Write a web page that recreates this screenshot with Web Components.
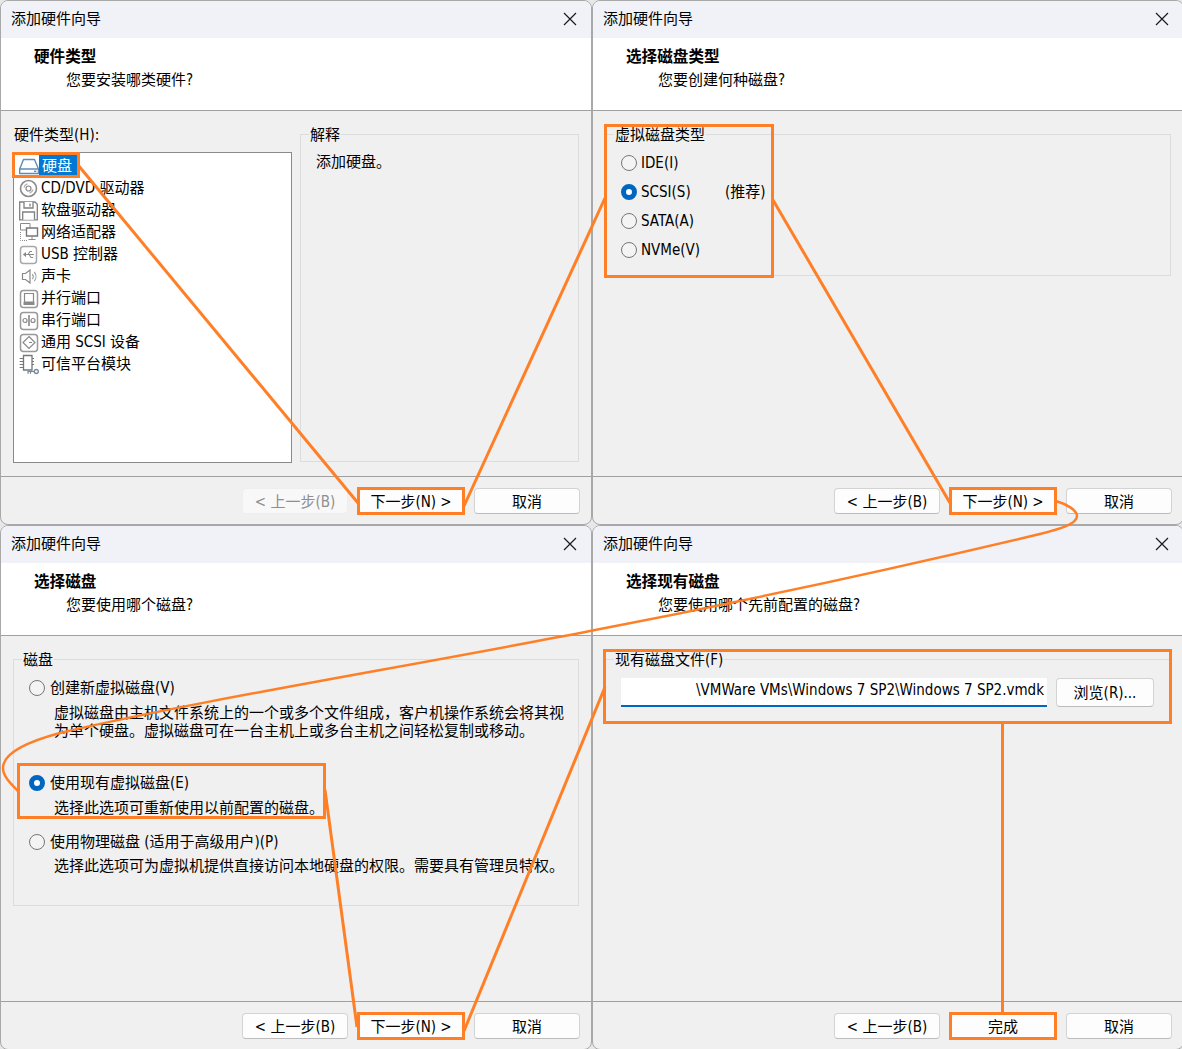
<!DOCTYPE html>
<html lang="zh-CN"><head><meta charset="utf-8"><title>添加硬件向导</title>
<style>
html,body{margin:0;padding:0;width:1182px;height:1049px;overflow:hidden;background:#e8e8e8}
body{position:relative;font:15px/20px "DejaVu Sans Condensed","Noto Sans CJK SC",sans-serif;color:#000}
.sheet{display:grid;grid-template-columns:592px 592px;grid-template-rows:525px 525px;width:1184px}
.w1{display:grid;grid-template-columns:279px 279px;column-gap:8px;padding:13px 12px 0 12px}
.list-label{margin-bottom:6px;display:block;line-height:22px;padding-left:1px}
.file{display:flex;gap:9px;padding:9px 0 17px 8px}
</style></head><body>
<div class="sheet">
<wiz-window heading="硬件类型" sub="您要安装哪类硬件?" back-disabled>
  <div class="w1">
    <div><span class="list-label">硬件类型(H):</span>
    <hw-list>
      <hw-item icon="hdd" selected>硬盘</hw-item>
      <hw-item icon="cd">CD/DVD 驱动器</hw-item>
      <hw-item icon="floppy">软盘驱动器</hw-item>
      <hw-item icon="net">网络适配器</hw-item>
      <hw-item icon="usb">USB 控制器</hw-item>
      <hw-item icon="sound">声卡</hw-item>
      <hw-item icon="par">并行端口</hw-item>
      <hw-item icon="ser">串行端口</hw-item>
      <hw-item icon="scsi">通用 SCSI 设备</hw-item>
      <hw-item icon="tpm">可信平台模块</hw-item>
    </hw-list></div>
    <wiz-group legend="解释" h="338"><wiz-desc style="margin:8px 0 0 8px">添加硬盘。</wiz-desc></wiz-group>
  </div>
</wiz-window>
<wiz-window heading="选择磁盘类型" sub="您要创建何种磁盘?">
  <div style="padding:13px 12px 0">
    <wiz-group legend="虚拟磁盘类型" h="152">
      <div style="padding-top:4px">
      <wiz-radio>IDE(I)</wiz-radio>
      <wiz-radio checked note="(推荐)">SCSI(S)</wiz-radio>
      <wiz-radio>SATA(A)</wiz-radio>
      <wiz-radio>NVMe(V)</wiz-radio>
      </div>
    </wiz-group>
  </div>
</wiz-window>
<wiz-window heading="选择磁盘" sub="您要使用哪个磁盘?">
  <div style="padding:13px 12px 0">
    <wiz-group legend="磁盘" h="257">
      <div style="padding-top:4px">
      <wiz-radio wide>创建新虚拟磁盘(V)</wiz-radio>
      <wiz-desc style="margin:2px 0 0 33px;line-height:18px">虚拟磁盘由主机文件系统上的一个或多个文件组成，客户机操作系统会将其视<br>为单个硬盘。虚拟磁盘可在一台主机上或多台主机之间轻松复制或移动。</wiz-desc>
      <wiz-radio wide checked style="margin-top:28px">使用现有虚拟磁盘(E)</wiz-radio>
      <wiz-desc style="margin:2px 0 0 33px;line-height:18px">选择此选项可重新使用以前配置的磁盘。</wiz-desc>
      <wiz-radio wide style="margin-top:10px">使用物理磁盘 (适用于高级用户)(P)</wiz-radio>
      <wiz-desc style="margin:1px 0 0 33px;line-height:18px">选择此选项可为虚拟机提供直接访问本地硬盘的权限。需要具有管理员特权。</wiz-desc>
      </div>
    </wiz-group>
  </div>
</wiz-window>
<wiz-window heading="选择现有磁盘" sub="您要使用哪个先前配置的磁盘?" finish>
  <div style="padding:13px 12px 0">
    <wiz-group legend="现有磁盘文件(F)" h="74">
      <div class="file"><wiz-path>\VMWare VMs\Windows 7 SP2\Windows 7 SP2.vmdk</wiz-path><wiz-btn w="98" h="29">浏览(R)...</wiz-btn></div>
    </wiz-group>
  </div>
</wiz-window>
</div>
<wiz-marks></wiz-marks>
<script>
const def=(n,html)=>customElements.define(n,class extends HTMLElement{
  connectedCallback(){ if(this.shadowRoot) return; const r=this.attachShadow({mode:'open'}); r.innerHTML=typeof html==='function'?html(this):html;}
});
def('wiz-btn',h=>`<style>:host{display:block}
.b{box-sizing:border-box;width:${h.getAttribute('w')||106}px;height:${h.getAttribute('h')||26}px;border:1px solid #d3d3d3;border-bottom-color:#bcbcbc;border-radius:4px;background:#fdfdfd;text-align:center;line-height:${(+h.getAttribute('h')||26)}px;color:#000;overflow:hidden}
:host([disabled]) .b{background:#f8f8f8;border-color:#eeeeee;color:#8f8f8f}</style><div class="b"><slot></slot></div>`);
def('wiz-window',h=>`<style>:host{display:flex;flex-direction:column;box-sizing:border-box;width:592px;height:525px;border:1px solid #a8a8a8;border-radius:8px;background:#f0f0f0;overflow:hidden}
.t{flex:none;box-sizing:border-box;height:37px;background:#f0f2f8;display:flex;align-items:center;justify-content:space-between;padding:0 14px 2px 10px}
.t svg{display:block}
.h{flex:none;height:64px;background:#fff;border-bottom:1px solid #a0a0a0;padding:8px 0 0 33px}
.h b{display:block;height:22px;line-height:22px;font-weight:700;font-size:15.6px}
.h span{display:block;padding:1px 0 0 32px;line-height:23px}
.m{flex:1;min-height:0}
.f{flex:none;height:48px;box-sizing:border-box;border-top:1px solid #a0a0a0;display:flex;justify-content:flex-end;gap:10px;padding:11px 11px 0 0}
</style><div class="t"><span>添加硬件向导</span><svg width="14" height="14" viewBox="0 0 14 14"><path d="M1 1L13 13M13 1L1 13" stroke="#1a1a1a" stroke-width="1.2" fill="none"/></svg></div>
<div class="h"><b>${h.getAttribute('heading')}</b><span>${h.getAttribute('sub')}</span></div>
<div class="m"><slot></slot></div>
<div class="f"><wiz-btn ${h.hasAttribute('back-disabled')?'disabled':''}>&lt; 上一步(B)</wiz-btn><wiz-btn>${h.hasAttribute('finish')?'完成':'下一步(N) &gt;'}</wiz-btn><wiz-btn>取消</wiz-btn></div>`);
def('wiz-group',h=>`<style>:host{display:block}
fieldset{margin:0;box-sizing:border-box;height:${h.getAttribute('h')}px;border:1px solid #dcdcdc;padding:0 0 0 7px;min-width:0}
legend{padding:0 1px;margin-left:1px;line-height:22px;height:20px}</style>
<fieldset><legend>${h.getAttribute('legend')}</legend><slot></slot></fieldset>`);
def('wiz-desc',`<style>:host{display:block}</style><slot></slot>`);
def('wiz-radio',h=>`<style>:host{display:flex;align-items:center;height:29px;padding-left:8px}
i{flex:none;box-sizing:border-box;width:16px;height:16px;border-radius:50%;border:1px solid #767676;background:#f4f4f4;margin-right:${h.hasAttribute('wide')?5:4}px}
:host([checked]) i{border:5px solid #0067c0;background:#fff}
.l{display:inline-block;min-width:84px}</style><i></i><span class="l"><slot></slot></span>${h.getAttribute('note')?`<span>${h.getAttribute('note')}</span>`:''}`);
def('wiz-path',`<style>:host{display:block;box-sizing:border-box;width:426px;height:29px;background:#fff;border-bottom:2px solid #0067c0;text-align:right;padding:0 3px 0 0;line-height:24px;overflow:hidden;white-space:nowrap}</style><slot></slot>`);
def('hw-list',`<style>:host{display:block;box-sizing:border-box;width:279px;height:311px;background:#fff;border:1px solid #8a8a8a;padding:2px 0 0 5px}</style><slot></slot>`);
const G='#8a8a8a';
const box=`<rect x="1.500" y="2.500" width="17" height="17" rx="3" fill="#fff" stroke="#999" stroke-width="1.500"/>`;
const ICONS={
hdd:`<g fill="#fff" stroke="#5b8db8" stroke-width="1.400" stroke-linejoin="round"><path d="M4.500 3.500H15.500L19.500 13V17.500H.7V13Z"/><path d="M.7 13H19.500"/></g><rect x="15" y="14.600" width="2.400" height="1.400" fill="#5b8db8"/>`,
cd:`<g fill="none" stroke="${G}"><circle cx="9.500" cy="10.500" r="8" stroke-width="1.600"/><circle cx="9.500" cy="10.500" r="2.500" stroke-width="1.200"/><path d="M5 9.500a4.800 4.800 0 0 1 3.400-3.600M14 11.500a4.800 4.800 0 0 1-3.400 3.600" stroke="#b0b0b0" stroke-width="1.200"/></g>`,
floppy:`<g fill="#fff" stroke="#808080" stroke-width="1.300"><path d="M.7 2H16L18.300 4.300V19.800H.7Z"/><path d="M5 2V8H14V2M11 3.500V6.500"/><path d="M3.700 19.800V12H15.500V19.800"/></g>`,
net:`<g fill="#fff" stroke="${G}"><path d="M1.500 1.500H11V8H1.500Z"/><path d="M7.500 6H18.500V14H7.500Z" stroke-width="1.400" stroke="#777"/><path d="M13 14V17M9.500 17.500H16.500"/><path d="M1.500 10V18.500H8" stroke-dasharray="1 1" fill="none"/></g>`,
usb:`<rect x="1.500" y="2.500" width="16" height="17" rx="3" fill="#fff" stroke="#a8a8a8" stroke-width="1.500"/><path d="M6 10.500H15M9 10.500L11 7.500H13M10 10.500L12 13.500H14" fill="none" stroke="${G}" stroke-width="1.100"/><path d="M7 8l-3.200 2.500 3.200 2.500z" fill="${G}"/>`,
sound:`<path d="M3.500 7.500H6.500L11 4V17L6.500 13.500H3.500Z" fill="#fff" stroke="${G}" stroke-width="1.200"/><path d="M13.300 8a4 4 0 0 1 0 5M15.300 6a7 7 0 0 1 0 9" fill="none" stroke="#a0a0a0" stroke-width="1.200"/>`,
par:`${box}<path d="M5.500 5.500H14.500V14H5.500Z" fill="none" stroke="#888" stroke-width="1.200"/><path d="M4.500 14H15.500V17H4.500Z" fill="#8a8a8a"/>`,
ser:`${box}<circle cx="6" cy="10.500" r="2" fill="none" stroke="${G}" stroke-width="1.200"/><circle cx="14" cy="10.500" r="2" fill="none" stroke="${G}" stroke-width="1.200"/><path d="M10 5V16" stroke="#777" stroke-width="1.400"/>`,
scsi:`${box}<path d="M10 4.500L16 10.500 10 16.500 4 10.500Z" fill="#fff" stroke="${G}" stroke-width="1.200"/><path d="M13 10.500H10" stroke="#888"/>`,
tpm:`<path d="M4.500 1.500H13V16H4.500Z" fill="#fff" stroke="#777" stroke-width="1.300"/><path d="M.7 4.500H4.500M.7 7.500H4.500M.7 10.500H4.500M.7 13.500H4.500M13 4.500H15M13 7.500H15M13 10.500H15" stroke="#777" stroke-width="1.100"/><circle cx="17.300" cy="17.500" r="2" fill="#fff" stroke="#6d8aa5" stroke-width="1.300"/><path d="M15.300 17.500H9V19.800M11.500 17.500V19.800" fill="none" stroke="#6d8aa5" stroke-width="1.200"/>`};
def('hw-item',h=>`<style>:host{display:flex;align-items:center;height:22px;white-space:nowrap}
svg{flex:none;display:block;width:20px;height:21px}
span{padding:0 6px 0 2px;line-height:22px}
:host([selected]) span{background:#0078d4;color:#fff;padding:0 5px 0 3px}</style>
<svg viewBox="0 0 20 21">${ICONS[h.getAttribute('icon')]}</svg><span><slot></slot></span>`);
def('wiz-marks',`<style>:host{position:absolute;left:0;top:0;width:1182px;height:1049px;pointer-events:none}
svg{display:block}</style>
<svg width="1182" height="1049" viewBox="0 0 1182 1049" fill="none" stroke="#ff7f27" stroke-width="3">
<rect x="13.500" y="153.500" width="65" height="23"/>
<path d="M78 165L358 503" />
<rect x="358.500" y="488.500" width="105" height="25"/>
<path d="M464 506L605 198" />
<rect x="605.500" y="125.500" width="167" height="151"/>
<path d="M773 200L950 503" />
<rect x="950.500" y="488.500" width="105" height="25"/>
<path d="M1056 501C1066 504 1077 510 1077 516C1077 524 1060 529 1040 534C880 572 720 606 590 631C400 668 200 700 60 733C30 741 3 752 3 768C3 776 10 783 18 791" stroke-width="2.500"/>
<rect x="18.500" y="764.500" width="306" height="53"/>
<path d="M325 790L357 1027" />
<rect x="358.500" y="1013.500" width="105" height="25"/>
<path d="M464 1031L605 687" />
<rect x="604.500" y="650.500" width="566" height="72"/>
<path d="M1002.500 723V1013" />
<rect x="950.500" y="1013.500" width="105" height="25"/>
</svg>`);
</script>
</body></html>
